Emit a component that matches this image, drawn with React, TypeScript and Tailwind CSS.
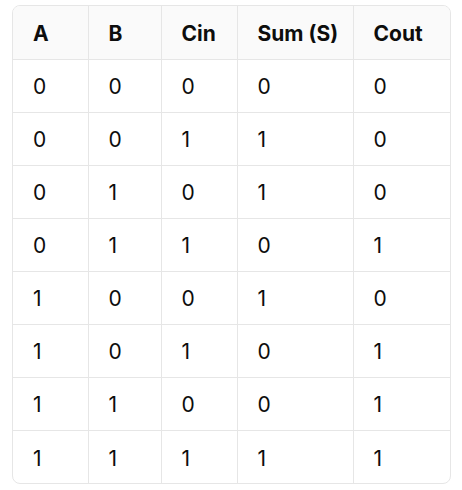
const headers = ["A", "B", "Cin", "Sum (S)", "Cout"];
const widths = ["w-[75px]", "w-[73px]", "w-[76px]", "w-[116px]", "w-[99px]"];

const rows = [
  [0, 0, 0, 0, 0],
  [0, 0, 1, 1, 0],
  [0, 1, 0, 1, 0],
  [0, 1, 1, 0, 1],
  [1, 0, 0, 1, 0],
  [1, 0, 1, 0, 1],
  [1, 1, 0, 0, 1],
  [1, 1, 1, 1, 1],
];

export default function App() {
  return (
    <div className="h-[490px] w-[462px] bg-white pl-3 pt-[5px] font-['Inter',sans-serif] text-[#0d0d0d]">
      <div className="w-[439px] overflow-hidden rounded-lg border border-[#e6e6e6]">
        <table className="w-full table-fixed border-collapse">
          <thead>
            <tr className="h-[53px] bg-[#fafafa]">
              {headers.map((h, i) => (
                <th
                  key={h}
                  className={`${widths[i]} border-l border-[#e6e6e6] pl-5 pt-[2px] text-left text-[21px] font-bold first:border-l-0`}
                >
                  {h}
                </th>
              ))}
            </tr>
          </thead>
          <tbody>
            {rows.map((r, ri) => (
              <tr key={ri} className="h-[53px] border-t border-[#e6e6e6]">
                {r.map((v, ci) => (
                  <td
                    key={ci}
                    className="border-l border-[#e6e6e6] pl-5 pt-[3px] text-[21px] first:border-l-0"
                  >
                    {v}
                  </td>
                ))}
              </tr>
            ))}
          </tbody>
        </table>
      </div>
    </div>
  );
}
